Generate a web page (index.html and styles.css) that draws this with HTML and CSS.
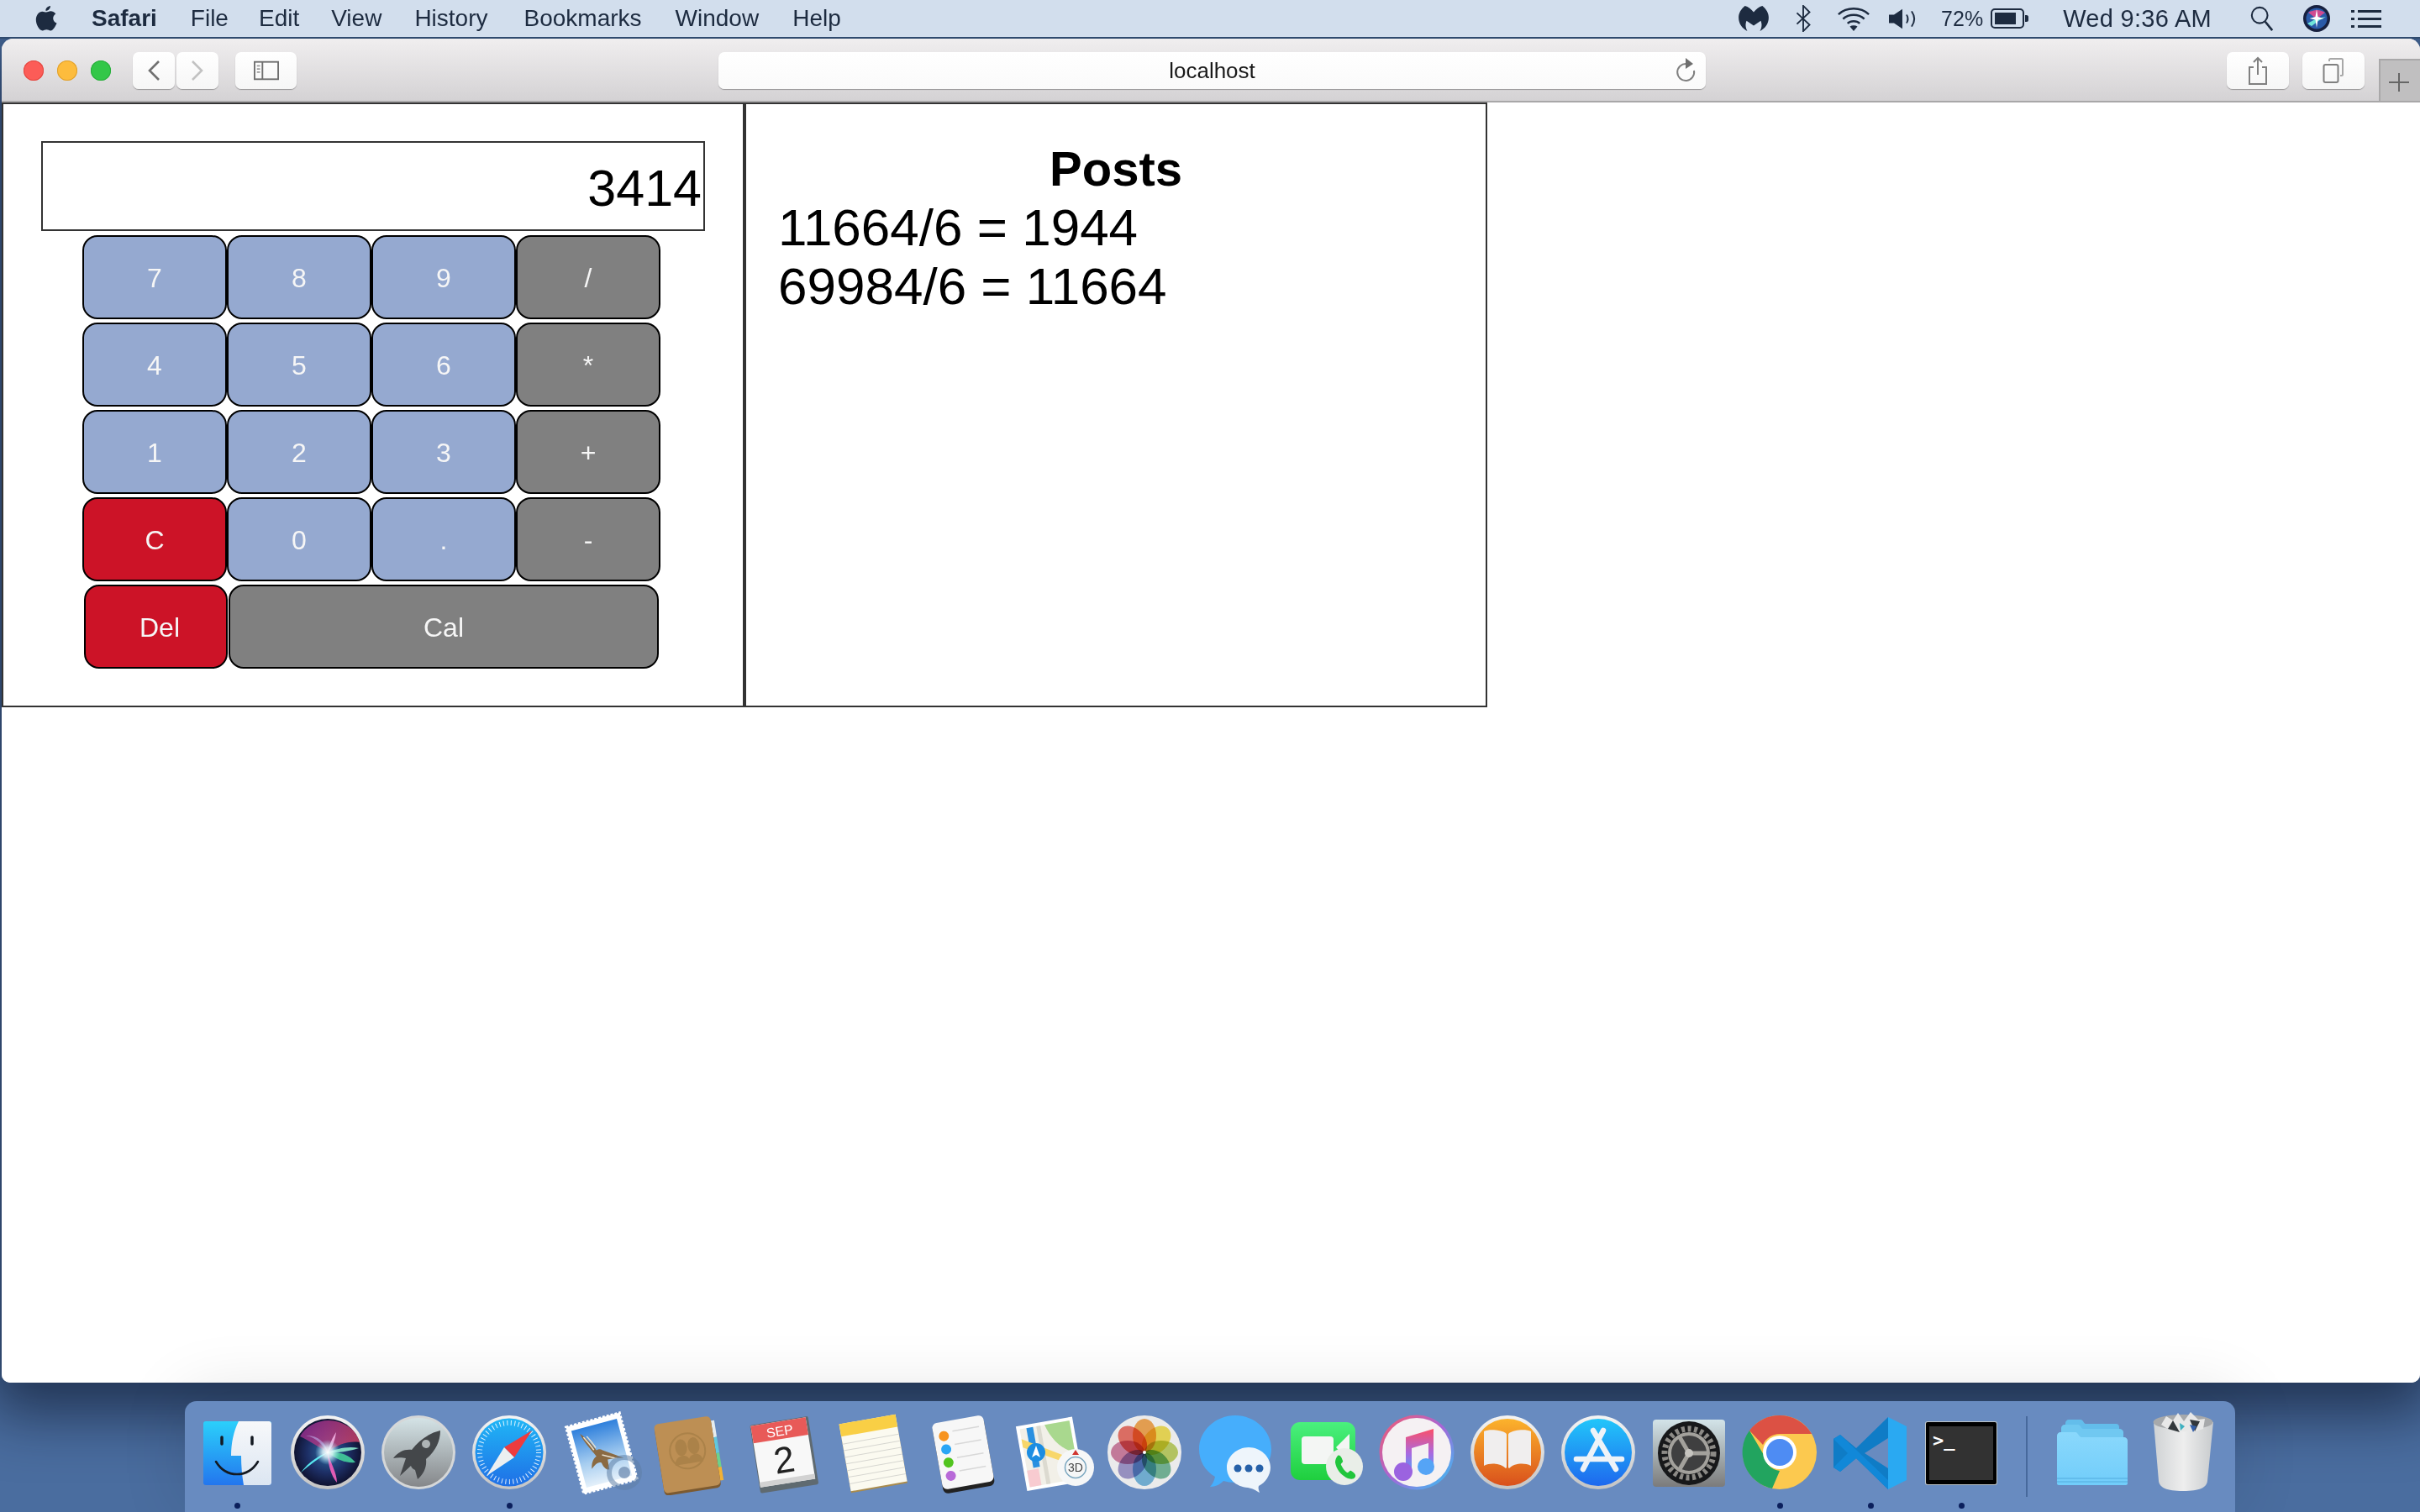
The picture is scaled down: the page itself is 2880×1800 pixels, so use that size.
FILE: index.html
```html
<!DOCTYPE html>
<html lang="en">
<head>
  <meta charset="UTF-8" />
  <title>localhost</title>
  <link rel="stylesheet" href="styles.css">
</head>
<body>
  <!-- shared gradients for the dock icons -->
  <svg class="svg-defs" width="0" height="0">
    <defs>
      <linearGradient id="gFinderL" x1="0" y1="0" x2="0" y2="1"><stop offset="0" stop-color="#2bd0fb"/><stop offset="1" stop-color="#2376ee"/></linearGradient>
      <linearGradient id="gFinderR" x1="0" y1="0" x2="0" y2="1"><stop offset="0" stop-color="#f7f8fa"/><stop offset="1" stop-color="#dce6f2"/></linearGradient>
      <linearGradient id="gRing" x1="0" y1="0" x2="0" y2="1"><stop offset="0" stop-color="#f4f4f4"/><stop offset="1" stop-color="#c4c4c4"/></linearGradient>
      <radialGradient id="gSiri" cx=".5" cy=".5" r=".55"><stop offset="0" stop-color="#2f6fa5"/><stop offset=".55" stop-color="#1d2f66"/><stop offset="1" stop-color="#0c0c24"/></radialGradient>
      <radialGradient id="gGlow" cx=".5" cy=".5" r=".5"><stop offset="0" stop-color="#fff"/><stop offset=".4" stop-color="#e8fbff" stop-opacity=".8"/><stop offset="1" stop-color="#9fe8ff" stop-opacity="0"/></radialGradient>
      <linearGradient id="gSiriTop" x1="0" y1="0" x2="1" y2=".4"><stop offset="0" stop-color="#8e2c9a"/><stop offset="1" stop-color="#d0436b"/></linearGradient>
      <linearGradient id="gLaunch" x1="0" y1="0" x2="0" y2="1"><stop offset="0" stop-color="#d4e3e6"/><stop offset="1" stop-color="#85878a"/></linearGradient>
      <linearGradient id="gSafari" x1="0" y1="0" x2="0" y2="1"><stop offset="0" stop-color="#20b6f6"/><stop offset="1" stop-color="#1f6fe6"/></linearGradient>
      <linearGradient id="gSky" x1="0" y1="0" x2="0" y2="1"><stop offset="0" stop-color="#2f80dc"/><stop offset=".6" stop-color="#a6cdf0"/><stop offset="1" stop-color="#e4f0fa"/></linearGradient>
      <linearGradient id="gFace" x1="0" y1="0" x2="0" y2="1"><stop offset="0" stop-color="#4af07e"/><stop offset="1" stop-color="#1fcf3e"/></linearGradient>
      <linearGradient id="gTunes" x1="0" y1="0" x2="1" y2="1"><stop offset="0" stop-color="#f95a68"/><stop offset=".5" stop-color="#a566d8"/><stop offset="1" stop-color="#2ec8f6"/></linearGradient>
      <linearGradient id="gNote" x1="0" y1="0" x2="0" y2="1"><stop offset="0" stop-color="#fb4f68"/><stop offset=".55" stop-color="#a969e0"/><stop offset="1" stop-color="#4aa3f8"/></linearGradient>
      <linearGradient id="gBooks" x1="0" y1="0" x2="0" y2="1"><stop offset="0" stop-color="#fcb32c"/><stop offset="1" stop-color="#d9501c"/></linearGradient>
      <linearGradient id="gStore" x1="0" y1="0" x2="0" y2="1"><stop offset="0" stop-color="#22c6fa"/><stop offset="1" stop-color="#1e68ee"/></linearGradient>
      <linearGradient id="gPrefs" x1="0" y1="0" x2="0" y2="1"><stop offset="0" stop-color="#d3e4e9"/><stop offset="1" stop-color="#7b7b7b"/></linearGradient>
      <linearGradient id="gFolder" x1="0" y1="0" x2="0" y2="1"><stop offset="0" stop-color="#8ad8fc"/><stop offset="1" stop-color="#71cdfa"/></linearGradient>
      <linearGradient id="gGlass" x1="0" y1="0" x2="1" y2="0"><stop offset="0" stop-color="#cfd2d4"/><stop offset=".5" stop-color="#eeeeee"/><stop offset="1" stop-color="#c8cbcd"/></linearGradient>
    </defs>
  </svg>

  <header class="menubar">
    <nav class="menu-left">
      <svg class="apple" width="26" height="32" viewBox="0 0 26 32"><path fill="#1d2b40" d="M18 1c.2 2.600-2.300 6-5.600 5.800C12.100 4 14.800 1.300 18 1zM13 8.500c1.400 0 3-1.300 5.500-1.300 1.600 0 4.200.7 5.800 3.200-4.700 2.900-3.700 9.300 1.200 11.100-1 2.700-4 9-7.300 9-1.800 0-2.700-1.200-4.800-1.200s-3.200 1.200-4.800 1.200C4.700 30.500.8 23.300.8 17.600c0-5.800 3.700-9.900 7.600-9.900 1.900 0 3.400.8 4.600.8z"/></svg>
      <span class="menu-app">Safari</span>
      <span>File</span>
      <span class="menu-edit">Edit</span>
      <span class="menu-view">View</span>
      <span class="menu-history">History</span>
      <span class="menu-bookmarks">Bookmarks</span>
      <span>Window</span>
      <span>Help</span>
    </nav>
    <div class="menu-right">
      <svg class="status-malware" width="36" height="32" viewBox="0 0 38 34"><path fill="#1d2b40" d="M8 1c4 1 8 4 11 8 3-4 7-7 11-8 5 4 8 9 8 15 0 8-5 14-11 17 2-4 3-8 1-13l-9 6-9-6c-2 5-1 9 1 13C5 30 0 24 0 16 0 10 3 5 8 1z"/></svg>
      <svg class="status-bt" width="20" height="32" viewBox="0 0 20 34"><path fill="none" stroke="#1d2b40" stroke-width="2" d="M2 10l16 15-8 8V1l8 8L2 24"/></svg>
      <svg class="status-wifi" width="42" height="29" viewBox="0 0 44 32"><g fill="none" stroke="#1d2b40" stroke-width="2.600"><path d="M2 10c11-10 29-10 40 0"/><path d="M8 16c8-7 20-7 28 0"/><path d="M14 22c4-4 12-4 16 0"/></g><path fill="#1d2b40" d="M22 32l-5-6c3-2 7-2 10 0z"/></svg>
      <svg class="status-vol" width="33" height="25" viewBox="0 0 33 30" preserveAspectRatio="none"><path fill="#1d2b40" d="M1 9h6l10-8v28L7 21H1z"/><g fill="none" stroke="#1d2b40" stroke-width="2"><path d="M22 9c2 4 2 8 0 12"/><path d="M28 4c4 7 4 15 0 22"/></g></svg>
      <span class="status-pct">72%</span>
      <svg class="status-batt" width="46" height="24" viewBox="0 0 46 24"><rect x="1" y="1" width="38" height="22" rx="4" fill="none" stroke="#1d2b40" stroke-width="2"/><rect x="5" y="5" width="25" height="14" fill="#1d2b40"/><path fill="#1d2b40" d="M41 8h2c1 0 2 1 2 2v4c0 1-1 2-2 2h-2z"/></svg>
      <span class="status-time">Wed 9:36 AM</span>
      <svg class="status-search" width="30" height="30" viewBox="0 0 30 32"><circle cx="12" cy="12" r="10" fill="none" stroke="#1d2b40" stroke-width="2.200"/><path d="M19 20l9 11" stroke="#1d2b40" stroke-width="2.800"/></svg>
      <svg class="status-siri" width="32" height="32" viewBox="0 0 32 32"><circle cx="16" cy="16" r="16" fill="#17203f"/><circle cx="16" cy="16" r="12.500" fill="#2a5aa8"/><path fill="#d04a90" d="M6 9c5-3 13-5 20 0-4 3-7 5-10 7-3-2-6-4-10-7z"/><path fill="#6fe3d8" d="M5 22l11-6 11-2-9 5-8 6z"/><path fill="#fff" d="M16 5l1.500 9 7 2-7 1.500L16 27l-1.500-9.500-7-1.500 7-2z"/></svg>
      <svg class="status-list" width="36" height="21" viewBox="0 0 36 21"><g fill="#1d2b40"><rect x="0" y="0" width="4" height="3"/><rect x="8" y="0" width="28" height="3"/><rect x="0" y="9" width="4" height="3"/><rect x="8" y="9" width="28" height="3"/><rect x="0" y="18" width="4" height="3"/><rect x="8" y="18" width="28" height="3"/></g></svg>
    </div>
  </header>

  <div class="window">
    <div class="toolbar">
      <div class="traffic">
        <span class="light light-red"></span>
        <span class="light light-yellow"></span>
        <span class="light light-green"></span>
      </div>
      <div class="nav-group">
        <button class="tool-btn nav-btn"><svg width="18" height="26" viewBox="0 0 18 26"><path d="M15 2L4 13l11 11" fill="none" stroke="#707070" stroke-width="2.600"/></svg></button>
        <button class="tool-btn nav-btn"><svg width="18" height="26" viewBox="0 0 18 26"><path d="M3 2l11 11L3 24" fill="none" stroke="#c2c2c2" stroke-width="2.600"/></svg></button>
      </div>
      <button class="tool-btn sidebar-btn"><svg width="30" height="24" viewBox="0 0 32 24"><rect x="1" y="1" width="30" height="22" fill="none" stroke="#6e6e6e" stroke-width="2"/><path d="M11 1v22" stroke="#6e6e6e" stroke-width="2"/><path d="M4 6h4M4 10h4M4 14h4" stroke="#9a9a9a" stroke-width="2"/></svg></button>
      <div class="urlbar">
        <span class="url-text">localhost</span>
        <svg class="url-reload" width="26" height="32" viewBox="0 0 26 32"><path d="M14 8a10 10 0 1 0 9 8" fill="none" stroke="#808080" stroke-width="2"/><path d="M13 1l9 7-9 6z" fill="#6e6e6e"/></svg>
      </div>
      <button class="tool-btn share-btn"><svg width="24" height="34" viewBox="0 0 24 34"><path d="M7 13H2v20h20V13h-5" fill="none" stroke="#808080" stroke-width="2"/><path d="M12 22V2M7 7l5-5 5 5" fill="none" stroke="#808080" stroke-width="2"/></svg></button>
      <button class="tool-btn tabs-btn"><svg width="26" height="30" viewBox="0 0 26 30"><rect x="1.500" y="8" width="17" height="21" rx="2" fill="none" stroke="#808080" stroke-width="2"/><path d="M8 4V2.500C8 1.700 8.700 1 9.500 1h13c.8 0 1.500.7 1.500 1.500v17c0 .8-.7 1.500-1.500 1.500H21" fill="none" stroke="#a8a8a8" stroke-width="2"/></svg></button>
      <div class="newtab"><svg width="24" height="22" viewBox="0 0 24 22"><path d="M12 0v22M0 11h24" stroke="#666" stroke-width="2"/></svg></div>
    </div>

    <main class="page">
      <section class="panel panel-calc">
        <div class="display">3414</div>
        <div class="keypad">
          <button class="key key-num">7</button>
          <button class="key key-num">8</button>
          <button class="key key-num">9</button>
          <button class="key key-op">/</button>
          <button class="key key-num">4</button>
          <button class="key key-num">5</button>
          <button class="key key-num">6</button>
          <button class="key key-op">*</button>
          <button class="key key-num">1</button>
          <button class="key key-num">2</button>
          <button class="key key-num">3</button>
          <button class="key key-op">+</button>
          <button class="key key-clear">C</button>
          <button class="key key-num">0</button>
          <button class="key key-num">.</button>
          <button class="key key-op">-</button>
        </div>
        <div class="keypad-last">
          <button class="key key-clear key-del">Del</button>
          <button class="key key-op key-cal">Cal</button>
        </div>
      </section>
      <section class="panel panel-posts">
        <h2 class="posts-title">Posts</h2>
        <div class="post">11664/6 = 1944</div>
        <div class="post">69984/6 = 11664</div>
      </section>
    </main>
  </div>

  <footer class="dock">
    <!-- finder -->
    <div class="dock-item has-dot"><svg class="dock-icon" viewBox="0 0 100 100"><rect x="10" y="12" width="81" height="76" rx="3" fill="url(#gFinderL)"/><path d="M52 12h36c1.700 0 3 1.300 3 3v70c0 1.700-1.300 3-3 3H58c-2-11-3-23-3-35H43c0-15 3-29 9-41z" fill="url(#gFinderR)"/><path d="M32 31v8M68 31v8" stroke="#141a22" stroke-width="3.500" stroke-linecap="round"/><path d="M25 60c12 20 38 20 50 0" fill="none" stroke="#141a22" stroke-width="2.600" stroke-linecap="round"/></svg></div>
    <!-- siri -->
    <div class="dock-item"><svg class="dock-icon" viewBox="0 0 100 100"><circle cx="50" cy="49" r="44" fill="url(#gRing)"/><circle cx="50" cy="49" r="40" fill="url(#gSiri)"/><path d="M17 30c10-18 38-27 60-10 5 4 9 10 11 17-12-2-26 2-38 12-10-6-22-14-33-19z" fill="url(#gSiriTop)" opacity=".8"/><path d="M50 49c10-4 24-8 37-5-10 3-23 6-37 5z" fill="#7fd8c0"/><path d="M50 49c12-1 25 2 33 12-12 1-24-4-33-12z" fill="#3fbf96"/><path d="M50 49c3 12 11 24 11 36-7-8-11-22-11-36z" fill="#e05cb5"/><path d="M50 49C40 56 28 64 18 73c10-13 21-20 32-24z" fill="#58e8f0"/><path d="M50 49c-5-8-14-18-26-20 13-1 24 8 26 20z" fill="#b28fd0" opacity=".8"/><path d="M50 49c2-10 6-18 10-24-1 8-4 18-10 24z" fill="#e9a6d8"/><circle cx="50" cy="49" r="15" fill="url(#gGlow)"/></svg></div>
    <!-- launchpad -->
    <div class="dock-item"><svg class="dock-icon" viewBox="0 0 100 100"><circle cx="50" cy="49" r="44" fill="#d5d7d8"/><circle cx="50" cy="49" r="41" fill="url(#gLaunch)"/><path d="M76 23c-13 3-25 11-34 23-8-1-16 2-22 10 5-1 11-1 15 0l-7 21 13-12c1 3 3 4 5 5l3 11c8-7 11-15 10-24 11-9 17-21 17-34z" fill="#44474a"/><circle cx="59" cy="39" r="5" fill="#aeb4b6"/></svg></div>
    <!-- safari -->
    <div class="dock-item has-dot"><svg class="dock-icon" viewBox="0 0 100 100"><circle cx="50" cy="49" r="44" fill="url(#gRing)"/><circle cx="50" cy="49" r="40.500" fill="url(#gSafari)"/><circle cx="50" cy="49" r="35" fill="none" stroke="#fff" stroke-width="6" stroke-dasharray="1 3.500" opacity=".85"/><path d="M77 23L44 43l12 12z" fill="#ee3b3f"/><path d="M23 77l21-34 12 12z" fill="#eceff1"/></svg></div>
    <!-- mail -->
    <div class="dock-item"><svg class="dock-icon" viewBox="0 0 100 100"><g transform="rotate(-15 52 50)"><rect x="19" y="9" width="66" height="82" fill="#fff" stroke="#fff" stroke-width="3" stroke-dasharray="3 2"/><rect x="24" y="15" width="56" height="70" fill="url(#gSky)"/><path d="M33 21c5 5 10 14 14 24 3-1 5 0 7 2l22 15c-8-2-14-3-19-3l-1 12c-3 0-6-3-7-10-4-3-9 1-13 4 1-6 4-11 9-13-4-10-10-20-12-31z" fill="#8a6a42"/><path d="M36 26c3 6 6 12 8 18M40 26c3 5 5 11 7 16M52 52l16 9" stroke="#e8e0d0" stroke-width="1.500" fill="none"/></g><circle cx="79" cy="73" r="18" fill="none" stroke="#5e7fa6" stroke-width="6" opacity=".55"/><circle cx="79" cy="73" r="7" fill="#6d8bb0" opacity=".75"/></svg></div>
    <!-- contacts -->
    <div class="dock-item"><svg class="dock-icon" viewBox="0 0 100 100"><g transform="rotate(-9 48 52)"><rect x="78" y="16" width="6" height="20" fill="#e6ecee"/><rect x="78" y="36" width="6" height="19" fill="#62c8dd"/><rect x="78" y="55" width="6" height="17" fill="#6ed08c"/><rect x="78" y="72" width="6" height="16" fill="#f0b136"/><rect x="12" y="12" width="68" height="84" rx="5" fill="#7c5a30"/><rect x="12" y="10" width="68" height="83" rx="5" fill="#bd8f54"/><circle cx="47" cy="47" r="21" fill="none" stroke="#ab8249" stroke-width="2"/><ellipse cx="40" cy="42" rx="7" ry="10" fill="#ab8249"/><ellipse cx="55" cy="42" rx="7" ry="10" fill="#ab8249"/><path d="M30 62c1-8 6-10 10-10s8 2 9 10zM46 62c1-8 5-10 9-10s8 2 9 10z" fill="#ab8249"/></g></svg></div>
    <!-- calendar -->
    <div class="dock-item"><svg class="dock-icon" viewBox="0 0 100 100"><g transform="rotate(-9 52 50)"><rect x="18" y="11" width="70" height="82" rx="2" fill="#5f6a70"/><rect x="19" y="12" width="66" height="74" fill="#f8f8f8"/><rect x="19" y="12" width="66" height="21" fill="#e85a58"/><rect x="19" y="80" width="66" height="6" fill="#d2d2d2"/><text class="cal-month" x="52" y="29">SEP</text><text class="cal-day" x="52" y="73">2</text></g></svg></div>
    <!-- notes -->
    <div class="dock-item"><svg class="dock-icon" viewBox="0 0 100 100"><g transform="rotate(-10 51 49)"><rect x="17" y="9" width="68" height="83" fill="#a98b4c"/><rect x="17" y="9" width="68" height="81" fill="#fbfaf0"/><rect x="17" y="9" width="68" height="15" fill="#f9cf45"/><path d="M17 33h68M17 41h68M17 49h68M17 57h68M17 65h68M17 73h68M17 81h68" stroke="#d6d6d0" stroke-width="1"/></g></svg></div>
    <!-- reminders -->
    <div class="dock-item"><svg class="dock-icon" viewBox="0 0 100 100"><g transform="rotate(-10 50 49)"><rect x="19" y="11" width="62" height="83" rx="6" fill="#222"/><rect x="19" y="9" width="62" height="80" rx="6" fill="#f7f7f7"/><circle cx="31" cy="26" r="6" fill="#f7931e"/><circle cx="31" cy="42" r="6" fill="#2aa5f5"/><circle cx="31" cy="58" r="6" fill="#52c41f"/><circle cx="31" cy="74" r="6" fill="#b86ad8"/><path d="M42 22h32M42 38h32M42 54h32M42 70h32" stroke="#d8d8d8" stroke-width="1.500"/></g></svg></div>
    <!-- maps -->
    <div class="dock-item"><svg class="dock-icon" viewBox="0 0 100 100"><g transform="rotate(-10 44 50)"><rect x="11" y="12" width="68" height="78" fill="#fff"/><rect x="15" y="16" width="60" height="70" fill="#f2f0e8"/><path d="M45 16h30v38C62 50 50 36 45 16z" fill="#a9d88e"/><rect x="23" y="16" width="8" height="48" fill="#2a90e0"/><path d="M15 38l60 34v-8L15 28z" fill="#f8d76a"/><path d="M15 66h14v20H15z" fill="#f8cbd0"/><rect x="35" y="16" width="5" height="70" fill="#dcdad0"/></g><circle cx="29" cy="49" r="11" fill="#1b8de2"/><path d="M29 41l5 14-5-3-5 3z" fill="#fff"/><circle cx="76" cy="67" r="22" fill="#f6f7f7"/><circle cx="76" cy="67" r="12.500" fill="none" stroke="#7aa6bf" stroke-width="1.500"/><text class="maps-3d" x="76" y="72">3D</text><path d="M76 46l4 6h-8z" fill="#d0352f"/></svg></div>
    <!-- photos -->
    <div class="dock-item"><svg class="dock-icon" viewBox="0 0 100 100"><circle cx="50" cy="49" r="44" fill="#ebebeb"/><g class="petals"><ellipse class="petal" cx="50" cy="29" rx="14" ry="20" fill="#f6a348"/><ellipse class="petal" cx="50" cy="29" rx="14" ry="20" fill="#f5e04c" transform="rotate(45 50 49)"/><ellipse class="petal" cx="50" cy="29" rx="14" ry="20" fill="#bdd15c" transform="rotate(90 50 49)"/><ellipse class="petal" cx="50" cy="29" rx="14" ry="20" fill="#6fb795" transform="rotate(135 50 49)"/><ellipse class="petal" cx="50" cy="29" rx="14" ry="20" fill="#6fb4de" transform="rotate(180 50 49)"/><ellipse class="petal" cx="50" cy="29" rx="14" ry="20" fill="#9b94cb" transform="rotate(225 50 49)"/><ellipse class="petal" cx="50" cy="29" rx="14" ry="20" fill="#d0799f" transform="rotate(270 50 49)"/><ellipse class="petal" cx="50" cy="29" rx="14" ry="20" fill="#ec6a5e" transform="rotate(315 50 49)"/></g><circle cx="50" cy="49" r="2" fill="#fff"/></svg></div>
    <!-- messages -->
    <div class="dock-item"><svg class="dock-icon" viewBox="0 0 100 100"><path d="M50 5C27 5 7 23 7 45c0 14 7 26 19 33-1 5-3 9-6 12 7 0 12-3 16-7 4 1 9 2 14 2 23 0 43-18 43-40S73 5 50 5z" fill="#46aefc"/><path d="M66 43c-14 0-26 11-26 24 0 13 11 23 25 24 6 1 9 3 14 6-1-3-2-6-1-8 8-4 14-13 14-22 0-13-12-24-26-24z" fill="#eef5fb"/><circle cx="53" cy="68" r="4.500" fill="#2560a8"/><circle cx="66" cy="68" r="4.500" fill="#2560a8"/><circle cx="79" cy="68" r="4.500" fill="#2560a8"/></svg></div>
    <!-- facetime -->
    <div class="dock-item"><svg class="dock-icon" viewBox="0 0 100 100"><rect x="8" y="13" width="77" height="69" rx="11" fill="url(#gFace)"/><rect x="21" y="30" width="38" height="33" rx="4" fill="#f4f6f4"/><path d="M62 43l16-16v34z" fill="#f4f6f4"/><circle cx="72" cy="66" r="22" fill="#e9eee8"/><path d="M64 53c3-2 5 3 6 6 1 2-3 3-2 5 2 4 4 7 7 9 2 1 3-3 5-2 3 2 6 4 5 7-2 4-7 3-11 1-7-4-12-11-13-18 0-3 1-6 3-8z" fill="#21c63c"/></svg></div>
    <!-- itunes -->
    <div class="dock-item"><svg class="dock-icon" viewBox="0 0 100 100"><circle cx="50" cy="49" r="44.500" fill="url(#gTunes)"/><circle cx="50" cy="49" r="41" fill="#f5f1f3"/><path d="M37 31l33-10v46h-6V38l-20 6v30h-7z" fill="url(#gNote)"/><circle cx="34" cy="72" r="11" fill="#9b63e0"/><circle cx="61" cy="66" r="10" fill="#55a4f6"/></svg></div>
    <!-- books -->
    <div class="dock-item"><svg class="dock-icon" viewBox="0 0 100 100"><circle cx="50" cy="49" r="44" fill="url(#gRing)"/><circle cx="50" cy="49" r="40" fill="url(#gBooks)"/><path d="M48 26c-6-4-20-5-26-2v41c8-4 20-3 26 3 1-1 1-1 1-2V28c0-1-1-2-1-2z" fill="#f0eeee"/><path d="M52 26c6-4 20-5 26-2v41c-8-4-20-3-26 3-1-1-1-1-1-2V28c0-1 1-2 1-2z" fill="#f0eeee"/></svg></div>
    <!-- app store -->
    <div class="dock-item"><svg class="dock-icon" viewBox="0 0 100 100"><circle cx="50" cy="49" r="44" fill="url(#gRing)"/><circle cx="50" cy="49" r="40" fill="url(#gStore)"/><g fill="none" stroke="#eef3f8" stroke-width="6.500" stroke-linecap="round"><path d="M56 23L32 69"/><path d="M44 23l27 46"/><path d="M24 57h54"/></g></svg></div>
    <!-- system preferences -->
    <div class="dock-item"><svg class="dock-icon" viewBox="0 0 100 100"><rect x="7" y="10" width="86" height="80" rx="4" fill="url(#gPrefs)"/><ellipse cx="50" cy="50" rx="37" ry="38" fill="#17181a"/><circle cx="50" cy="50" r="29" fill="none" stroke="#8c8a86" stroke-width="7" stroke-dasharray="4 3.500"/><circle cx="50" cy="50" r="23" fill="#3f3f40" stroke="#a3a19c" stroke-width="4"/><path d="M50 50h22M50 50L39 31M50 50L39 69" stroke="#a3a19c" stroke-width="5"/><circle cx="50" cy="50" r="5" fill="#c6c4bf"/></svg></div>
    <!-- chrome -->
    <div class="dock-item has-dot"><svg class="dock-icon" viewBox="0 0 100 100"><circle cx="50" cy="49" r="44" fill="#fcc94f"/><path d="M50 5a44 44 0 0 1 38.100 22H50a22 22 0 0 0-20 13L14 23A44 44 0 0 1 50 5z" fill="#dc5144"/><path d="M14 23l17 29a22 22 0 0 0 19 19L41 92A44 44 0 0 1 14 23z" fill="#22a45f"/><circle cx="50" cy="49" r="20" fill="#fff"/><circle cx="50" cy="49" r="16" fill="#4e8cf3"/></svg></div>
    <!-- vs code -->
    <div class="dock-item has-dot"><svg class="dock-icon" viewBox="0 0 100 100"><path d="M71 7l22 11v64L71 93z" fill="#2aa9f2"/><path d="M71 7L33 44 14 28 6 33v34l8 5 19-16 38 37V68L43 50 71 32z" fill="#0f7cc6"/><path d="M6 33l8-5 57 54v11L33 56 14 72l-8-5 17-17z" fill="#1188d8"/></svg></div>
    <!-- terminal -->
    <div class="dock-item has-dot"><svg class="dock-icon" viewBox="0 0 100 100"><rect x="7" y="12" width="86" height="76" rx="3" fill="#bcc4c8"/><rect x="8" y="13" width="84" height="74" rx="2" fill="#000"/><rect x="12" y="18" width="76" height="64" fill="#323232"/><text class="term-prompt" x="16" y="42">&gt;_</text></svg></div>
    <div class="dock-sep"></div>
    <!-- downloads folder -->
    <div class="dock-item"><svg class="dock-icon" viewBox="0 0 100 100"><path d="M18 14c0-2 2-4 4-4h14c3 0 4 5 6 5h36c3 0 4 2 4 4v12H18z" fill="#63bdeb"/><path d="M13 20c0-2 2-4 4-4h16c3 0 4 5 6 5h43c3 0 5 2 5 4v10H13z" fill="#70c8f1"/><path d="M8 29c0-2 2-4 4-4h18c3 0 4 6 7 6h51c2 0 4 2 4 4v51c0 1-1 2-2 2H10c-1 0-2-1-2-2z" fill="url(#gFolder)"/><path d="M8 80h84M8 84h84" stroke="#5db8e8" stroke-width="1.500"/></svg></div>
    <!-- trash -->
    <div class="dock-item"><svg class="dock-icon" viewBox="0 0 100 100"><path d="M15 13l6 70c1 8 9 12 29 12s28-4 29-12l7-70z" fill="url(#gGlass)"/><ellipse cx="50" cy="13" rx="35.500" ry="9" fill="#a7a9ab"/><path d="M24 16l6-10 8 5 6-9 7 10 8-11 9 9 8-1-2 12c-14 5-30 4-44-1z" fill="#e8e8e8"/><path d="M38 11l8 14-14-4zM58 10l6 14 6-12z" fill="#33383c"/><path d="M46 14l6 4-5 5z" fill="#3db0c0"/><path d="M58 16l8 2-4 7z" fill="#345fa8"/></svg></div>
  </footer>
</body>
</html>
```

FILE: styles.css
```css
* {
  box-sizing: border-box;
}
html, body {
  margin: 0;
  height: 100%;
}
body {
  height: 1800px;
  overflow: hidden;
  display: flex;
  flex-direction: column;
  font-family: "Liberation Sans", Arial, sans-serif;
  background: #4a6d9f;
}
.svg-defs {
  flex: none;
}

/* menu bar */
.menubar {
  height: 46px;
  flex: none;
  display: flex;
  justify-content: space-between;
  align-items: center;
  padding: 0 46px 0 42px;
  background: #d2deed;
  border-bottom: 2px solid #2f4a6e;
  color: #1d2b40;
  font-size: 28px;
  position: relative;
  z-index: 2;
}
.menu-left {
  display: flex;
  align-items: center;
  gap: 40px;
}
.menu-left .apple {
  margin-right: 1px;
}
.menu-app {
  font-weight: bold;
}
.menu-edit {
  margin-left: -4px;
}
.menu-view {
  margin-left: -2px;
}
.menu-history {
  margin-left: -1px;
}
.menu-bookmarks {
  margin-left: 3px;
}
.menu-right {
  display: flex;
  align-items: center;
}
.status-bt {
  margin-left: 31px;
}
.status-wifi {
  margin-left: 29px;
}
.status-vol {
  margin-left: 20px;
}
.status-pct {
  margin-left: 30px;
  font-size: 25px;
}
.status-batt {
  margin-left: 9px;
}
.status-time {
  margin-left: 40px;
  font-size: 29px;
  letter-spacing: 0.3px;
}
.status-search {
  margin-left: 45px;
}
.status-siri {
  margin-left: 34px;
}
.status-list {
  margin-left: 25px;
}

/* browser window */
.window {
  flex: 1;
  margin-left: 2px;
  display: flex;
  flex-direction: column;
  background: #fff;
  border-radius: 14px 14px 10px 10px;
  box-shadow: 0 20px 70px 16px rgba(8, 16, 36, 0.62);
  min-height: 0;
}
.toolbar {
  height: 76px;
  flex: none;
  display: flex;
  align-items: flex-start;
  padding: 16px 0 0 26px;
  background: linear-gradient(#f0eeef, #d4d2d4);
  border-bottom: 2px solid #a8a7a8;
  border-radius: 14px 14px 0 0;
}
.traffic {
  display: flex;
  gap: 16px;
  margin-top: 10px;
}
.light {
  width: 24px;
  height: 24px;
  border-radius: 50%;
}
.light-red {
  background: #fc5c57;
  box-shadow: inset 0 0 0 1px #e2463f;
}
.light-yellow {
  background: #fdbc3d;
  box-shadow: inset 0 0 0 1px #e0a02c;
}
.light-green {
  background: #33c748;
  box-shadow: inset 0 0 0 1px #2aad3c;
}
.tool-btn {
  height: 44px;
  padding: 0;
  display: flex;
  align-items: center;
  justify-content: center;
  background: linear-gradient(#ffffff, #f6f6f6);
  border: none;
  border-radius: 7px;
  box-shadow: 0 1px 1px rgba(0, 0, 0, 0.3);
}
.nav-group {
  display: flex;
  gap: 2px;
  margin-left: 26px;
}
.nav-btn {
  width: 50px;
}
.sidebar-btn {
  width: 73px;
  margin-left: 20px;
}
.urlbar {
  width: 1175px;
  height: 44px;
  margin-left: 502px;
  display: flex;
  align-items: center;
  justify-content: center;
  position: relative;
  background: linear-gradient(#ffffff, #fafafa);
  border-radius: 7px;
  box-shadow: 0 1px 1px rgba(0, 0, 0, 0.3);
}
.url-text {
  font-size: 26px;
  color: #1a1a1a;
}
.url-reload {
  position: absolute;
  right: 11px;
  top: 6px;
}
.share-btn {
  width: 74px;
  margin-left: 620px;
}
.tabs-btn {
  width: 74px;
  margin-left: 16px;
}
.newtab {
  width: 49px;
  height: 50px;
  margin: 8px 0 0 17px;
  padding: 4px 4px 0 0;
  display: flex;
  align-items: center;
  justify-content: center;
  background: #c0bfc0;
  border-left: 2px solid #a9a8a9;
  border-top: 2px solid #a9a8a9;
}

/* page content */
.page {
  display: flex;
  align-items: flex-start;
  flex: 1;
  background: #fff;
  border-radius: 0 0 10px 10px;
}
.panel {
  border: 2px solid #333;
  height: 720px;
}
.panel-calc {
  width: 884px;
  padding: 44px 45px 44px 45px;
}
.panel-posts {
  width: 884px;
  padding: 0 38px;
}
.display {
  height: 107px;
  padding: 0 2px 0 0;
  border: 2px solid #333;
  text-align: right;
  font-size: 61px;
  line-height: 108px;
  color: #000;
}
.keypad {
  display: grid;
  grid-template-columns: repeat(4, 172px);
  grid-auto-rows: 100px;
  row-gap: 4px;
  justify-content: start;
  margin: 5px 0 4px 49px;
}
.keypad-last {
  display: grid;
  grid-template-columns: 171px 512px;
  grid-auto-rows: 100px;
  column-gap: 1px;
  margin-left: 51px;
}
.key {
  padding: 3px 0 0;
  border: 2px solid #000;
  border-radius: 18px;
  color: #f6f6f6;
  font-family: "Liberation Sans", Arial, sans-serif;
  font-size: 32px;
}
.key-del {
  padding-left: 9px;
}
.key-num {
  background: #95a9d0;
}
.key-op {
  background: #808080;
}
.key-clear {
  background: #cc1327;
}
.posts-title {
  margin: 45px 0 3px;
  text-align: center;
  font-size: 58px;
  line-height: 64px;
  font-weight: bold;
  color: #000;
}
.post {
  font-size: 62px;
  line-height: 70px;
  color: #000;
}

/* dock */
.dock {
  width: 2440px;
  height: 132px;
  flex: none;
  margin: 22px 0 0 220px;
  padding: 12px 8px 0;
  display: flex;
  align-items: flex-start;
  background: #688bc0;
  border-radius: 14px 14px 0 0;
  box-shadow: 0 -8px 80px rgba(0, 0, 0, 0.12);
  position: relative;
}
.dock-item {
  width: 108px;
  flex: none;
  display: flex;
  flex-direction: column;
  align-items: center;
}
.dock-icon {
  width: 100px;
  height: 100px;
  display: block;
}
.has-dot::after {
  content: "";
  width: 7px;
  height: 7px;
  margin-top: 9px;
  border-radius: 50%;
  background: #0b1f5c;
}
.dock-sep {
  width: 2px;
  height: 96px;
  margin: 6px 23px 0;
  background: #47699c;
}
.petal {
  mix-blend-mode: multiply;
  opacity: 0.92;
}
.cal-month {
  font-size: 16px;
  fill: #fff;
  text-anchor: middle;
}
.cal-day {
  font-size: 44px;
  fill: #222;
  text-anchor: middle;
}
.maps-3d {
  font-size: 14px;
  fill: #444;
  text-anchor: middle;
}
.term-prompt {
  font-family: "DejaVu Sans Mono", monospace;
  font-size: 22px;
  font-weight: bold;
  fill: #fff;
}
```
